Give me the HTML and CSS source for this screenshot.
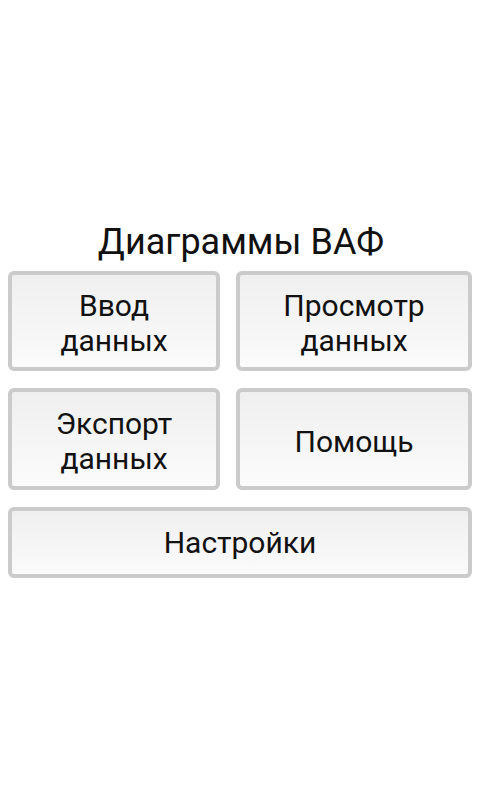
FILE: index.html
```html
<!DOCTYPE html>
<html>
<head>
    <meta charset="utf-8">
    <title>Диаграммы ВАФ</title>
    <link rel="stylesheet" href="styles.css">
</head>
<body>
    <div class="screen">
        <h1 class="title">Диаграммы ВАФ</h1>
        <div class="menu">
            <button class="menu-btn row-1">Ввод<br>данных</button>
            <button class="menu-btn row-1">Просмотр<br>данных</button>
            <button class="menu-btn row-2">Экспорт<br>данных</button>
            <button class="menu-btn row-2">Помощь</button>
            <button class="menu-btn wide">Настройки</button>
        </div>
    </div>
</body>
</html>
```

FILE: styles.css
```css
/* Global styles */
* {
    margin: 0;
    padding: 0;
    box-sizing: border-box;
}

body {
    font-family: Roboto, 'Noto Sans', sans-serif;
    background-color: #fff;
    color: #111;
    width: 480px;
    height: 800px;
}

.screen {
    padding: 222px 8px 0;
}

.title {
    font-size: 36px;
    font-weight: 400;
    line-height: 40px;
    text-align: center;
    margin-bottom: 9px;
    padding-left: 2px;
}

.menu {
    display: grid;
    grid-template-columns: 212px 236px;
    column-gap: 16px;
    row-gap: 17px;
}

.menu-btn {
    font-family: inherit;
    font-size: 30px;
    line-height: 35px;
    color: #111;
    border: 4px solid #cbcbcb;
    border-radius: 6px;
    background: linear-gradient(to bottom, #efefef, #fbfbfb);
}

.row-1 {
    height: 100px;
    padding-top: 4px;
}

.row-2 {
    height: 102px;
    padding-top: 4px;
}

.wide {
    grid-column: 1 / 3;
    height: 71px;
}
```
